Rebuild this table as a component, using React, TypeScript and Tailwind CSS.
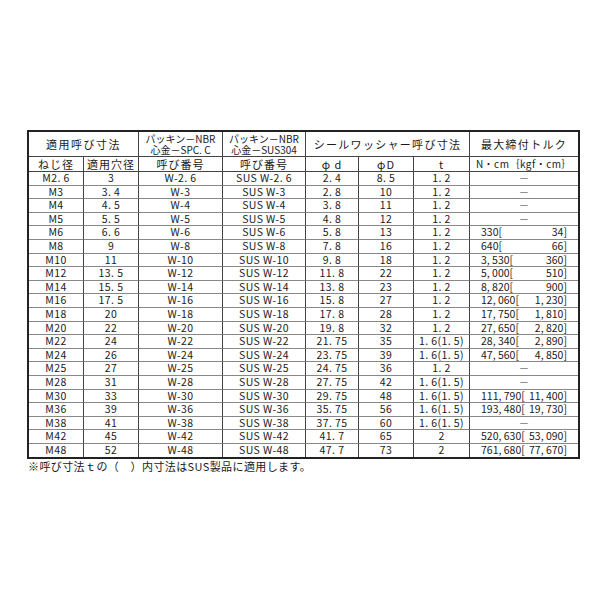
import React from "react";

type Row = [string, string, string, string, string, string, string, [string, string] | null];

const rows: Row[] = [
  ["M2. 6", "3", "W-2. 6", "SUS W-2. 6", "2. 4", "8. 5", "1. 2", null],
  ["M3", "3. 4", "W-3", "SUS W-3", "2. 8", "10", "1. 2", null],
  ["M4", "4. 5", "W-4", "SUS W-4", "3. 8", "11", "1. 2", null],
  ["M5", "5. 5", "W-5", "SUS W-5", "4. 8", "12", "1. 2", null],
  ["M6", "6. 6", "W-6", "SUS W-6", "5. 8", "13", "1. 2", ["330", "34"]],
  ["M8", "9", "W-8", "SUS W-8", "7. 8", "16", "1. 2", ["640", "66"]],
  ["M10", "11", "W-10", "SUS W-10", "9. 8", "18", "1. 2", ["3, 530", "360"]],
  ["M12", "13. 5", "W-12", "SUS W-12", "11. 8", "22", "1. 2", ["5, 000", "510"]],
  ["M14", "15. 5", "W-14", "SUS W-14", "13. 8", "23", "1. 2", ["8, 820", "900"]],
  ["M16", "17. 5", "W-16", "SUS W-16", "15. 8", "27", "1. 2", ["12, 060", "1, 230"]],
  ["M18", "20", "W-18", "SUS W-18", "17. 8", "28", "1. 2", ["17, 750", "1, 810"]],
  ["M20", "22", "W-20", "SUS W-20", "19. 8", "32", "1. 2", ["27, 650", "2, 820"]],
  ["M22", "24", "W-22", "SUS W-22", "21. 75", "35", "1. 6(1. 5)", ["28, 340", "2, 890"]],
  ["M24", "26", "W-24", "SUS W-24", "23. 75", "39", "1. 6(1. 5)", ["47, 560", "4, 850"]],
  ["M25", "27", "W-25", "SUS W-25", "24. 75", "36", "1. 2", null],
  ["M28", "31", "W-28", "SUS W-28", "27. 75", "42", "1. 6(1. 5)", null],
  ["M30", "33", "W-30", "SUS W-30", "29. 75", "48", "1. 6(1. 5)", ["111, 790", "11, 400"]],
  ["M36", "39", "W-36", "SUS W-36", "35. 75", "56", "1. 6(1. 5)", ["193, 480", "19, 730"]],
  ["M38", "41", "W-38", "SUS W-38", "37. 75", "60", "1. 6(1. 5)", null],
  ["M42", "45", "W-42", "SUS W-42", "41. 7", "65", "2", ["520, 630", "53, 090"]],
  ["M48", "52", "W-48", "SUS W-48", "47. 7", "73", "2", ["761, 680", "77, 670"]],
];

const font = { fontFamily: '"Noto Sans CJK JP", "Noto Sans", sans-serif' };

export default function App() {
  return (
    <div className="w-[600px] h-[600px] bg-white text-[#1a1a1a]" style={font}>
      <div className="pt-[130px] pl-[27px]">
        <div className="w-[553px] border-2 border-[#222]">
          <div className="grid grid-cols-[55px_55px_84px_83px_53px_55px_56px_108px]">
            {/* header row 1 */}
            <div className="col-span-2 h-[25px] flex items-center justify-center border-r border-b border-[#444] text-[11px] tracking-[1.5px]">
              適用呼び寸法
            </div>
            <div className="h-[25px] flex flex-col items-center justify-center border-r border-b border-[#444] text-[10px]">
              <div className="h-[11px] leading-[11px]">パッキン－NBR</div>
              <div className="h-[11px] leading-[11px]">心金－SPC. C</div>
            </div>
            <div className="h-[25px] flex flex-col items-center justify-center border-r border-b border-[#444] text-[10px]">
              <div className="h-[11px] leading-[11px]">パッキン－NBR</div>
              <div className="h-[11px] leading-[11px]">心金－SUS304</div>
            </div>
            <div className="col-span-3 h-[25px] flex items-center justify-center border-r border-b border-[#444] text-[11px] tracking-[1.3px]">
              シールワッシャー呼び寸法
            </div>
            <div className="h-[25px] flex items-center justify-center border-b border-[#444] text-[11px] tracking-[1.3px]">
              最大締付トルク
            </div>

            {/* header row 2 */}
            {["ねじ径", "適用穴径", "呼び番号", "呼び番号", "φ d", "φD", "t"].map((h, i) => (
              <div
                key={i}
                className="h-[15px] flex items-center justify-center border-r border-b border-[#444] text-[11px] leading-none tracking-[1px]"
              >
                {h}
              </div>
            ))}
            <div className="h-[15px] flex items-center justify-center border-b border-[#444] text-[10px] leading-none tracking-[0.5px]">
              N・cm｛kgf・cm｝
            </div>

            {/* data rows */}
            {rows.map((r, ri) => {
              const last = ri === rows.length - 1;
              const bb = last ? "" : "border-b border-[#888]";
              return (
                <React.Fragment key={ri}>
                  {r.slice(0, 7).map((c, ci) => (
                    <div
                      key={ci}
                      className={`h-[13.6px] flex items-center justify-center whitespace-nowrap border-r border-r-[#444] ${bb} text-[10.5px] leading-none tracking-[0.4px]`}
                    >
                      {c as string}
                    </div>
                  ))}
                  <div className={`h-[13.6px] flex items-center ${bb} text-[10.5px] leading-none`}>
                    {r[7] ? (
                      <div className="w-full flex justify-between whitespace-nowrap pl-[11px] pr-[11px]">
                        <span>{r[7][0]}[</span>
                        <span>{r[7][1]}]</span>
                      </div>
                    ) : (
                      <div className="w-full text-center text-[#777]">－</div>
                    )}
                  </div>
                </React.Fragment>
              );
            })}
          </div>
        </div>
        <div className="pl-[1px] text-[11px] tracking-[0.4px] leading-[14px]">
          ※呼び寸法ｔの（　）内寸法はSUS製品に適用します。
        </div>
      </div>
    </div>
  );
}
